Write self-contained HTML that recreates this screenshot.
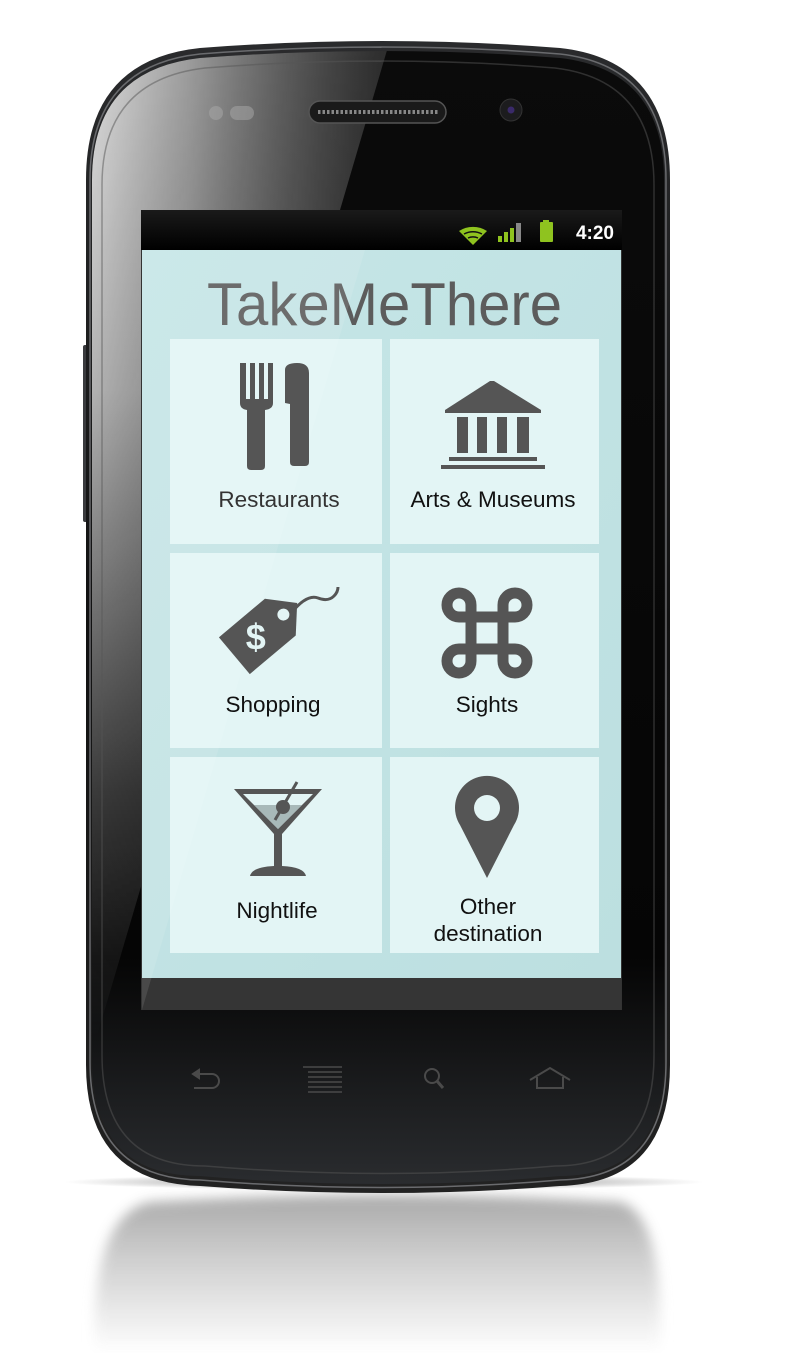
<!DOCTYPE html>
<html><head><meta charset="utf-8"><style>
html,body{margin:0;padding:0;background:#fff;width:788px;height:1353px;overflow:hidden}
svg{display:block}
</style></head><body>
<svg width="788" height="1353" viewBox="0 0 788 1353" xmlns="http://www.w3.org/2000/svg">
<defs>
<linearGradient id="refl" x1="0" y1="0" x2="0" y2="1">
<stop offset="0" stop-color="#a0a0a0"/><stop offset="0.4" stop-color="#cacaca"/><stop offset="1" stop-color="#fff"/>
</linearGradient>
<linearGradient id="body" x1="0" y1="0" x2="0" y2="1">
<stop offset="0" stop-color="#2a2b2d"/><stop offset="0.5" stop-color="#111"/><stop offset="1" stop-color="#222"/>
</linearGradient>
<linearGradient id="face" x1="0" y1="0" x2="0" y2="1">
<stop offset="0" stop-color="#0b0b0b"/><stop offset="0.8" stop-color="#050505"/><stop offset="1" stop-color="#2a2c2f"/>
</linearGradient>
<linearGradient id="glare" x1="0" y1="0" x2="1" y2="0">
<stop offset="0" stop-color="#fff" stop-opacity="1"/><stop offset="0.35" stop-color="#ccc" stop-opacity="0.85"/><stop offset="1" stop-color="#666" stop-opacity="0.4"/>
</linearGradient>
<linearGradient id="vfade" x1="0" y1="0" x2="0" y2="1">
<stop offset="0" stop-color="#fff"/><stop offset="0.35" stop-color="#fff" stop-opacity="0.8"/><stop offset="0.75" stop-color="#fff" stop-opacity="0.25"/><stop offset="1" stop-color="#fff" stop-opacity="0"/>
</linearGradient>
<mask id="gm"><rect x="0" y="40" width="788" height="1000" fill="url(#vfade)"/></mask>
<linearGradient id="scr" x1="0" y1="0" x2="1" y2="1">
<stop offset="0" stop-color="#c6e6e7"/><stop offset="1" stop-color="#bcdfe0"/>
</linearGradient>
<linearGradient id="sb" x1="0" y1="0" x2="0" y2="1">
<stop offset="0" stop-color="#1a1a1a"/><stop offset="1" stop-color="#000"/>
</linearGradient>
<radialGradient id="shadow" cx="0.5" cy="0.5" r="0.5">
<stop offset="0" stop-color="#000" stop-opacity="0.55"/><stop offset="1" stop-color="#000" stop-opacity="0"/>
</radialGradient>
<clipPath id="faceclip"><path d="M200 58 Q384 44 560 58 Q664 70 664 180 L664 1060 Q664 1176 560 1176 Q384 1192 200 1176 Q92 1176 92 1060 L92 180 Q92 70 200 58Z"/></clipPath>
<filter id="blur"><feGaussianBlur stdDeviation="6"/></filter>
</defs>

<!-- reflection -->
<path d="M150 1202 Q384 1188 620 1202 Q665 1215 660 1353 L95 1353 Q90 1215 150 1202Z" fill="url(#refl)" opacity="0.9" filter="url(#blur)"/>
<ellipse cx="384" cy="1182" rx="320" ry="8" fill="url(#shadow)"/>

<!-- side button -->
<rect x="83" y="345" width="8" height="177" rx="2" fill="#3a3b3e"/>

<!-- body -->
<path d="M200 48 Q384 34 560 48 Q670 60 670 180 L670 1065 Q670 1183 560 1186 Q384 1200 200 1186 Q86 1183 86 1065 L86 180 Q86 60 200 48Z" fill="url(#body)"/>
<path d="M200 54 Q384 40 560 54 Q666 66 666 180 L666 1062 Q666 1178 560 1180 Q384 1195 200 1180 Q90 1178 90 1062 L90 180 Q90 66 200 54Z" fill="none" stroke="#6a6b6e" stroke-width="1.5"/>
<path d="M200 58 Q384 44 560 58 Q664 70 664 180 L664 1060 Q664 1176 560 1176 Q384 1192 200 1176 Q92 1176 92 1060 L92 180 Q92 70 200 58Z" fill="url(#face)"/>
<g clip-path="url(#faceclip)" mask="url(#gm)">
<path d="M80 40 L390 40 L90 1060 Z" fill="url(#glare)" opacity="0.9"/>
</g>
<path d="M205 68 Q384 54 555 68 Q654 80 654 185 L654 1055 Q654 1166 555 1166 Q384 1181 205 1166 Q102 1166 102 1055 L102 185 Q102 80 205 68Z" fill="none" stroke="#555" stroke-opacity="0.5" stroke-width="1.5"/>

<!-- earpiece, sensors, camera -->
<rect x="309" y="101" width="137" height="22" rx="11" fill="#1a1a1a" stroke="#555" stroke-width="1.5"/>
<line x1="318" y1="112" x2="438" y2="112" stroke="#888" stroke-width="4" stroke-dasharray="2.5 2"/>
<circle cx="216" cy="113" r="7" fill="#aaa" opacity="0.5"/>
<rect x="230" y="106" width="24" height="14" rx="7" fill="#aaa" opacity="0.5"/>
<circle cx="511" cy="110" r="11" fill="#1c1c1e" stroke="#333" stroke-width="1"/>
<circle cx="511" cy="110" r="3.5" fill="#3a2a6a"/>

<!-- screen -->
<rect x="141" y="210" width="481" height="800" fill="#333"/>
<rect x="141" y="210" width="481" height="40" fill="url(#sb)"/>
<rect x="142" y="250" width="479" height="728" fill="url(#scr)"/>
<rect x="142" y="978" width="479" height="32" fill="#353535"/>

<!-- status icons -->
<path d="M459 231 A26 26 0 0 1 487 231 L473 245 Z" fill="#8fc31f"/>
<path d="M464 234 A19 19 0 0 1 482 234" fill="none" stroke="#111" stroke-width="1.5"/>
<path d="M468 238 A12 12 0 0 1 478 238" fill="none" stroke="#111" stroke-width="1.5"/>
<rect x="498" y="236" width="4" height="6" fill="#8fc31f"/>
<rect x="504" y="232" width="4" height="10" fill="#8fc31f"/>
<rect x="510" y="228" width="4" height="14" fill="#8fc31f"/>
<rect x="516" y="223" width="5" height="19" fill="#888"/>
<rect x="543" y="220" width="6" height="3" fill="#8fc31f"/>
<rect x="540" y="222" width="13" height="20" rx="1" fill="#8fc31f"/>
<text x="614" y="239" text-anchor="end" font-family="Liberation Sans, sans-serif" font-weight="bold" font-size="19" fill="#fff">4:20</text>

<!-- title -->
<text x="207" y="325" textLength="355" lengthAdjust="spacingAndGlyphs" font-family="Liberation Sans, sans-serif" font-size="60" fill="#5c5c5c">TakeMeThere</text>

<!-- tiles -->
<g fill="#e3f5f5">
<rect x="170" y="339" width="212" height="205"/>
<rect x="390" y="339" width="209" height="205"/>
<rect x="170" y="553" width="212" height="195"/>
<rect x="390" y="553" width="209" height="195"/>
<rect x="170" y="757" width="212" height="196"/>
<rect x="390" y="757" width="209" height="196"/>
</g>
<!-- screen glare -->
<path d="M142 250 L365 250 L142 1010Z" fill="#fff" opacity="0.1"/>

<g fill="#555">
<!-- fork -->
<path d="M240 363 h6 v36 h4 v-36 h5 v36 h4 v-36 h5 v36 h4 v-36 h5 v40 q0 6 -8 7 v56 q0 4 -4 4 h-10 q-4 0 -4 -4 v-56 q-7 -1 -7 -7Z"/>
<!-- knife -->
<path d="M285 403 V370 q0 -7 12 -7 q12 0 12 10 v89 q0 4 -4 4 h-11 q-4 0 -4 -4 v-58Z"/>
<!-- museum -->
<path d="M445 410 L490 381 L494 381 L541 410 V413 H445Z"/>
<rect x="457" y="417" width="11" height="36"/><rect x="477" y="417" width="10" height="36"/><rect x="497" y="417" width="10" height="36"/><rect x="517" y="417" width="12" height="36"/>
<rect x="449" y="457" width="88" height="4"/><rect x="441" y="465" width="104" height="4"/>
<!-- tag -->
<g transform="translate(265,630) rotate(-40)">
<path d="M-40 -24 H20 L42 0 L20 24 H-40Z"/>
<circle cx="24" cy="0" r="6" fill="#e3f5f5"/>
<text x="-12" y="12" text-anchor="middle" font-family="Liberation Sans, sans-serif" font-weight="bold" font-size="36" fill="#e3f5f5" transform="rotate(40 -12 0)">$</text>
</g>
<path d="M292 612 q15 -18 26 -14 q10 4 16 -2 q4 -4 4 -9" fill="none" stroke="#555" stroke-width="3"/>
<!-- command -->
<path d="M471 617 V605 A12 12 0 1 0 459 617 H515 A12 12 0 1 0 503 605 V661 A12 12 0 1 0 515 649 H459 A12 12 0 1 0 471 661 Z" fill="none" stroke="#555" stroke-width="11"/>
<!-- martini -->
<path d="M234 789 H322 L282 834 V866 q22 1 24 10 H250 q2 -9 24 -10 V834Z M243 794 L278 829 L313 794Z" fill-rule="evenodd"/>
<path d="M254 805 L302 805 L278 829Z" fill="#9aa" opacity="0.8"/>
<circle cx="283" cy="807" r="7"/>
<line x1="275" y1="820" x2="297" y2="782" stroke="#555" stroke-width="3"/>
<!-- pin -->
<path d="M487 878 L460 825 A32 32 0 1 1 514 825Z"/>
<circle cx="487" cy="808" r="13" fill="#e3f5f5"/>
</g>

<g font-family="Liberation Sans, sans-serif" font-size="22.5" fill="#111" text-anchor="middle">
<text x="279" y="507" fill="#333">Restaurants</text>
<text x="493" y="507">Arts &amp; Museums</text>
<text x="273" y="712">Shopping</text>
<text x="487" y="712">Sights</text>
<text x="277" y="918">Nightlife</text>
<text x="488" y="914">Other</text>
<text x="488" y="941">destination</text>
</g>

<!-- nav buttons -->
<g fill="none" stroke="#4a4a4a" stroke-width="2">
<path d="M194 1074 H212 a7 7 0 0 1 0 14 H194"/>
<path d="M193 1074 l6 -4 v8z" fill="#4a4a4a"/>
<path d="M303 1067 H342 M308 1072 H342 M308 1077 H342 M308 1082 H342 M308 1087 H342 M308 1092 H342" stroke-width="1.5"/>
<circle cx="432" cy="1076" r="7"/>
<path d="M437 1081 l6 7" stroke-width="3"/>
<path d="M530 1080 L550 1068 L570 1080 M537 1077 V1088 H563 V1077"/>
</g>
</svg>
</body></html>
